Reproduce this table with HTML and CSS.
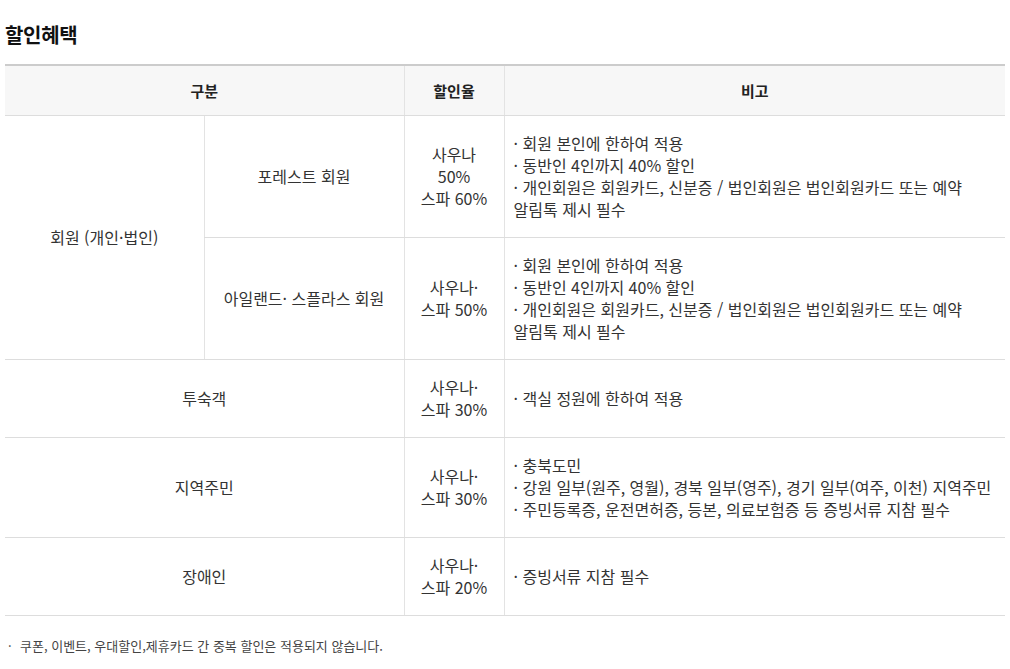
FILE: index.html
```html
<!DOCTYPE html>
<html lang="ko">
<head>
<meta charset="utf-8">
<link rel="stylesheet" href="styles.css">
</head>
<body>
<div class="page">
  <h2 class="title">할인혜택</h2>
  <table class="tbl">
    <colgroup>
      <col class="c1"><col class="c2"><col class="c3"><col class="c4">
    </colgroup>
    <thead>
      <tr>
        <th colspan="2">구분</th>
        <th>할인율</th>
        <th>비고</th>
      </tr>
    </thead>
    <tbody>
      <tr>
        <td rowspan="2">회원 (개인·법인)</td>
        <td>포레스트 회원</td>
        <td>사우나<br>50%<br>스파 60%</td>
        <td class="note">· 회원 본인에 한하여 적용<br>· 동반인 4인까지 40% 할인<br>· 개인회원은 회원카드, 신분증 / 법인회원은 법인회원카드 또는 예약<br>알림톡 제시 필수</td>
      </tr>
      <tr>
        <td>아일랜드· 스플라스 회원</td>
        <td>사우나·<br>스파 50%</td>
        <td class="note">· 회원 본인에 한하여 적용<br>· 동반인 4인까지 40% 할인<br>· 개인회원은 회원카드, 신분증 / 법인회원은 법인회원카드 또는 예약<br>알림톡 제시 필수</td>
      </tr>
      <tr>
        <td colspan="2">투숙객</td>
        <td>사우나·<br>스파 30%</td>
        <td class="note">· 객실 정원에 한하여 적용</td>
      </tr>
      <tr>
        <td colspan="2">지역주민</td>
        <td>사우나·<br>스파 30%</td>
        <td class="note">· 충북도민<br>· 강원 일부(원주, 영월), 경북 일부(영주), 경기 일부(여주, 이천) 지역주민<br>· 주민등록증, 운전면허증, 등본, 의료보험증 등 증빙서류 지참 필수</td>
      </tr>
      <tr>
        <td colspan="2">장애인</td>
        <td>사우나·<br>스파 20%</td>
        <td class="note">· 증빙서류 지참 필수</td>
      </tr>
    </tbody>
  </table>
  <p class="foot"><span class="dot">·</span>쿠폰, 이벤트, 우대할인,제휴카드 간 중복 할인은 적용되지 않습니다.</p>
</div>
</body>
</html>
```

FILE: styles.css
```css
html, body {
  margin: 0;
  padding: 0;
  background: #fff;
}
body {
  font-family: "Noto Sans CJK KR", "Noto Sans", sans-serif;
  color: #333;
}
.page {
  padding: 0 5px;
}
.title {
  margin: 0;
  padding: 22px 0 16px;
  font-size: 20px;
  line-height: 26px;
  font-weight: 700;
  color: #111;
  letter-spacing: -0.3px;
}
.tbl {
  width: 1000px;
  border-collapse: collapse;
  table-layout: fixed;
  border-top: 2px solid #ccc;
  font-size: 16px;
  line-height: 22px;
}
.c1 { width: 199px; }
.c2 { width: 200px; }
.c3 { width: 100px; }
.c4 { width: 501px; }
.tbl th {
  background: #f7f7f7;
  height: 49px;
  padding: 0;
  font-size: 15px;
  font-weight: 700;
  color: #222;
  border-bottom: 1px solid #ddd;
  border-left: 1px solid #e3e3e3;
}
.tbl td {
  padding: 16px 0 17px;
  text-align: center;
  vertical-align: middle;
  border-bottom: 1px solid #ddd;
  border-left: 1px solid #e3e3e3;
}
.tbl tr > :first-child {
  border-left: none;
}
.tbl tbody tr:nth-child(2) > :first-child {
  border-left: 1px solid #e3e3e3;
}
.tbl td.note {
  text-align: left;
  padding-left: 9px;
}
.foot {
  margin: 21px 0 0;
  font-size: 13px;
  line-height: 18px;
  color: #444;
}
.dot {
  display: inline-block;
  width: 15px;
  padding-left: 3px;
  box-sizing: border-box;
}
```
